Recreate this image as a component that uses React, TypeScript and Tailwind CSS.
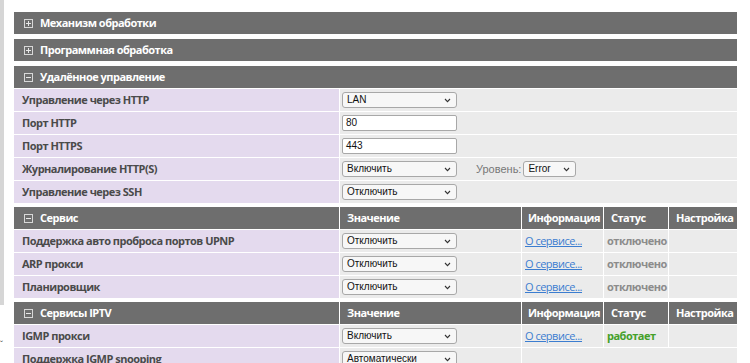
import React from "react";

const F = { fontFamily: '"Open Sans", "Noto Sans", sans-serif', letterSpacing: "-0.5px" };
const A = { fontFamily: '"Liberation Sans", Arial, sans-serif' };

function Box({ open }: { open: boolean }) {
  return (
    <svg width="9" height="9" viewBox="0 0 9 9" className="shrink-0">
      <rect x="0.5" y="0.5" width="8" height="8" fill="none" stroke="#d8d8d8" strokeWidth="1" />
      <line x1="2" y1="4.5" x2="7" y2="4.5" stroke="#e8e8e8" strokeWidth="1" />
      {!open && <line x1="4.5" y1="2" x2="4.5" y2="7" stroke="#e8e8e8" strokeWidth="1" />}
    </svg>
  );
}

function Chevron() {
  return (
    <svg width="7" height="5" viewBox="0 0 7 5">
      <path d="M1 1 L3.5 3.6 L6 1" fill="none" stroke="#333" strokeWidth="1.1" />
    </svg>
  );
}

function Sel({ value, w = "w-[115px]" }: { value: string; w?: string }) {
  return (
    <div
      className={`${w} h-[16px] shrink-0 flex items-center justify-between pl-[4px] pr-[5px] border border-[#a8a8a8] rounded-[3px] bg-[#f7f7f7] text-[10px] text-[#111] leading-none`}
      style={A}
    >
      <span>{value}</span>
      <Chevron />
    </div>
  );
}

function Inp({ value }: { value: string }) {
  return (
    <div
      className="w-[115px] h-[16px] flex items-center pl-[3px] border border-[#a8a8a8] rounded-[2px] bg-white text-[10px] text-[#111] leading-none"
      style={A}
    >
      {value}
    </div>
  );
}

const H = "bg-[#6e6e6e] flex items-center text-white font-bold text-[11px]";

function SectionHeader({ title, open, cols }: { title: string; open: boolean; cols?: boolean }) {
  if (!cols) {
    return (
      <div className={`h-[22px] shrink-0 pl-[10px] gap-[7px] ${H}`}>
        <Box open={open} />
        <span style={F}>{title}</span>
      </div>
    );
  }
  return (
    <div className="h-[22px] shrink-0 flex gap-px">
      <div className={`w-[325px] pl-[10px] gap-[7px] ${H}`}>
        <Box open={open} />
        <span style={F}>{title}</span>
      </div>
      <div className={`w-[181px] pl-[7px] ${H}`} style={F}>Значение</div>
      <div className={`w-[81px] pl-[6px] ${H}`} style={F}>Информация</div>
      <div className={`w-[64px] pl-[7px] ${H}`} style={F}>Статус</div>
      <div className={`flex-1 pl-[7px] ${H}`} style={F}>Настройка</div>
    </div>
  );
}

function Label({ text }: { text: string }) {
  return (
    <div className="w-[325px] shrink-0 bg-[#e4daee] flex items-center pl-[8px] text-[11px] font-bold text-[#4a4a4a]" style={F}>
      {text}
    </div>
  );
}

function SimpleRow({ label, children }: { label: string; children: React.ReactNode }) {
  return (
    <div className="h-[22px] shrink-0 flex gap-px">
      <Label text={label} />
      <div className="flex-1 bg-[#ebebeb] flex items-center pl-[2px]">{children}</div>
    </div>
  );
}

function SvcRow({ label, value, status, ok, info = true }: { label: string; value: string; status?: string; ok?: boolean; info?: boolean }) {
  return (
    <div className="h-[22px] shrink-0 flex gap-px">
      <Label text={label} />
      <div className="w-[181px] bg-[#ebebeb] flex items-center pl-[2px]">
        <Sel value={value} />
      </div>
      {info ? (
        <>
          <div className="w-[81px] bg-[#ebebeb] flex items-center pl-[3px] text-[11px] text-[#3b7dd0] underline" style={F}>
            О сервисе...
          </div>
          <div
            className={`w-[64px] bg-[#ebebeb] flex items-center pl-[3px] text-[11px] font-bold ${ok ? "text-[#44a02a]" : "text-[#8c8c8c]"}`}
            style={F}
          >
            {status}
          </div>
          <div className="flex-1 bg-[#ebebeb]" />
        </>
      ) : (
        <div className="flex-1 bg-[#ebebeb]" />
      )}
    </div>
  );
}

export default function App() {
  return (
    <div className="w-[750px] h-[363px] overflow-hidden bg-white flex items-start">
      <div className="w-[14px] shrink-0 relative h-[363px]">
        <div className="w-[4px] h-[305px] bg-[#d6d6d6]" />
        <span className="absolute left-0 top-[338px] text-[9px] text-[#555]" style={A}>ˇ</span>
      </div>
      <div className="w-[723px] shrink-0 pt-[12px] flex flex-col">
        <SectionHeader title="Механизм обработки" open={false} />
        <div className="h-[5px] shrink-0" />
        <SectionHeader title="Программная обработка" open={false} />
        <div className="h-[5px] shrink-0" />
        <div className="flex flex-col gap-px shrink-0">
          <SectionHeader title="Удалённое управление" open={true} />
          <SimpleRow label="Управление через HTTP"><Sel value="LAN" /></SimpleRow>
          <SimpleRow label="Порт HTTP"><Inp value="80" /></SimpleRow>
          <SimpleRow label="Порт HTTPS"><Inp value="443" /></SimpleRow>
          <SimpleRow label="Журналирование HTTP(S)">
            <Sel value="Включить" />
            <span className="ml-[19px] mr-[2px] text-[11px] text-[#777]" style={A}>Уровень:</span>
            <Sel value="Error" w="w-[53px]" />
          </SimpleRow>
          <SimpleRow label="Управление через SSH"><Sel value="Отключить" /></SimpleRow>
        </div>
        <div className="h-[4px] shrink-0" />
        <div className="flex flex-col gap-px shrink-0">
          <SectionHeader title="Сервис" open={true} cols />
          <SvcRow label="Поддержка авто проброса портов UPNP" value="Отключить" status="отключено" />
          <SvcRow label="ARP прокси" value="Отключить" status="отключено" />
          <SvcRow label="Планировщик" value="Отключить" status="отключено" />
        </div>
        <div className="h-[4px] shrink-0" />
        <div className="flex flex-col gap-px shrink-0">
          <SectionHeader title="Сервисы IPTV" open={true} cols />
          <SvcRow label="IGMP прокси" value="Включить" status="работает" ok />
          <SvcRow label="Поддержка IGMP snooping" value="Автоматически" info={false} />
        </div>
      </div>
    </div>
  );
}
